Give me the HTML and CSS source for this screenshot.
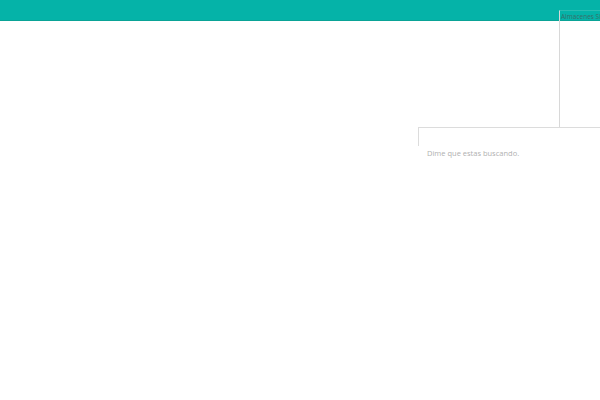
FILE: index.html
```html
<!DOCTYPE html>
<html lang="es">
<head>
<meta charset="utf-8">
<title>Buscador</title>
<link rel="stylesheet" href="styles.css">
</head>
<body>
<header class="topbar"></header>
<div class="store-panel">
  <div class="store-name">Almacenes Siman</div>
</div>
<div class="search">
  <div class="search-edge"></div>
  <div class="search-placeholder">Dime que estas buscando.</div>
</div>
</body>
</html>
```
FILE: styles.css
```css
html, body {
  margin: 0;
  padding: 0;
  background: #ffffff;
  font-family: "Open Sans", "Liberation Sans", sans-serif;
  overflow: hidden;
}
.topbar {
  height: 20px;
  background: #05b3a8;
  border-bottom: 1px solid #0aa396;
}
.store-panel {
  position: absolute;
  left: 559px;
  top: 10px;
  width: 41px;
  height: 117px;
  border-left: 1px solid #d8d8d8;
  border-top: 1px solid #2bbdb2;
  box-sizing: border-box;
  overflow: hidden;
}
.store-name {
  font-size: 6.5px;
  color: #3a6f6a;
  padding: 1px 0 0 1px;
  white-space: nowrap;
  line-height: 9px;
}
.search {
  position: absolute;
  left: 418px;
  top: 127px;
  width: 182px;
  border-top: 1px solid #dcdcdc;
}
.search-edge {
  width: 0;
  height: 18px;
  border-left: 1px solid #dcdcdc;
}
.search-placeholder {
  padding: 2px 0 0 9px;
  font-size: 7.5px;
  color: #b0b0b0;
  line-height: 10px;
}
```
